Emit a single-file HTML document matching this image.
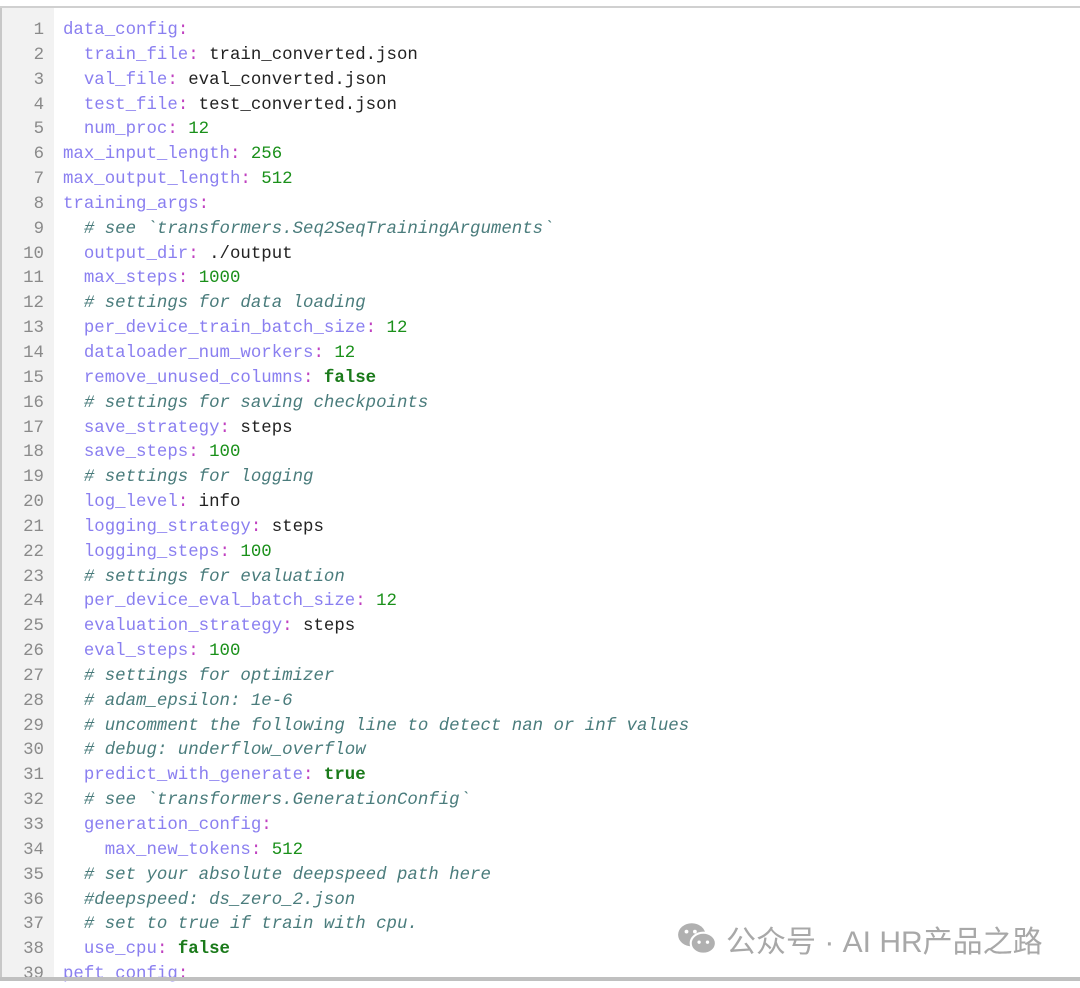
<!DOCTYPE html>
<html><head><meta charset="utf-8"><style>
body{margin:0;width:1080px;height:981px;overflow:hidden;background:#fff;position:relative}
.top{position:absolute;left:0;top:6px;width:1080px;height:2px;background:#d0d0d0}
.gut{position:absolute;left:0;top:8px;width:54px;height:970px;background:#f2f2f2;border-left:2px solid #c8c8c8;box-sizing:border-box}
.code{position:absolute;left:0;top:19px;font-family:"Liberation Mono",monospace;font-size:17.4px;line-height:24.84px;white-space:pre}
.ln{display:inline-block;width:44px;text-align:right;color:#8a8a8a;margin-right:19px}
.k{color:#8a7ff0}.c{color:#c040c0}.n{color:#1a901a}.b{color:#1a7a1a;font-weight:bold}.m{color:#4a7c7c;font-style:italic}.v{color:#222}
.bot{position:absolute;left:0;top:977px;width:1080px;height:4px;background:#c0c0c0}
.wm{position:absolute;left:676px;top:917px;font-family:"Liberation Sans","Noto Sans CJK SC",sans-serif;font-size:30px;color:#a8a8a8;display:flex;align-items:center;gap:8px}
</style></head><body>
<div class="top"></div><div class="gut"></div>
<div class="code"><span class="ln">1</span><span class="k">data_config</span><span class="c">:</span>
<span class="ln">2</span>  <span class="k">train_file</span><span class="c">:</span><span class="v"> train_converted.json</span>
<span class="ln">3</span>  <span class="k">val_file</span><span class="c">:</span><span class="v"> eval_converted.json</span>
<span class="ln">4</span>  <span class="k">test_file</span><span class="c">:</span><span class="v"> test_converted.json</span>
<span class="ln">5</span>  <span class="k">num_proc</span><span class="c">:</span> <span class="n">12</span>
<span class="ln">6</span><span class="k">max_input_length</span><span class="c">:</span> <span class="n">256</span>
<span class="ln">7</span><span class="k">max_output_length</span><span class="c">:</span> <span class="n">512</span>
<span class="ln">8</span><span class="k">training_args</span><span class="c">:</span>
<span class="ln">9</span>  <span class="m"># see `transformers.Seq2SeqTrainingArguments`</span>
<span class="ln">10</span>  <span class="k">output_dir</span><span class="c">:</span><span class="v"> ./output</span>
<span class="ln">11</span>  <span class="k">max_steps</span><span class="c">:</span> <span class="n">1000</span>
<span class="ln">12</span>  <span class="m"># settings for data loading</span>
<span class="ln">13</span>  <span class="k">per_device_train_batch_size</span><span class="c">:</span> <span class="n">12</span>
<span class="ln">14</span>  <span class="k">dataloader_num_workers</span><span class="c">:</span> <span class="n">12</span>
<span class="ln">15</span>  <span class="k">remove_unused_columns</span><span class="c">:</span> <span class="b">false</span>
<span class="ln">16</span>  <span class="m"># settings for saving checkpoints</span>
<span class="ln">17</span>  <span class="k">save_strategy</span><span class="c">:</span><span class="v"> steps</span>
<span class="ln">18</span>  <span class="k">save_steps</span><span class="c">:</span> <span class="n">100</span>
<span class="ln">19</span>  <span class="m"># settings for logging</span>
<span class="ln">20</span>  <span class="k">log_level</span><span class="c">:</span><span class="v"> info</span>
<span class="ln">21</span>  <span class="k">logging_strategy</span><span class="c">:</span><span class="v"> steps</span>
<span class="ln">22</span>  <span class="k">logging_steps</span><span class="c">:</span> <span class="n">100</span>
<span class="ln">23</span>  <span class="m"># settings for evaluation</span>
<span class="ln">24</span>  <span class="k">per_device_eval_batch_size</span><span class="c">:</span> <span class="n">12</span>
<span class="ln">25</span>  <span class="k">evaluation_strategy</span><span class="c">:</span><span class="v"> steps</span>
<span class="ln">26</span>  <span class="k">eval_steps</span><span class="c">:</span> <span class="n">100</span>
<span class="ln">27</span>  <span class="m"># settings for optimizer</span>
<span class="ln">28</span>  <span class="m"># adam_epsilon: 1e-6</span>
<span class="ln">29</span>  <span class="m"># uncomment the following line to detect nan or inf values</span>
<span class="ln">30</span>  <span class="m"># debug: underflow_overflow</span>
<span class="ln">31</span>  <span class="k">predict_with_generate</span><span class="c">:</span> <span class="b">true</span>
<span class="ln">32</span>  <span class="m"># see `transformers.GenerationConfig`</span>
<span class="ln">33</span>  <span class="k">generation_config</span><span class="c">:</span>
<span class="ln">34</span>    <span class="k">max_new_tokens</span><span class="c">:</span> <span class="n">512</span>
<span class="ln">35</span>  <span class="m"># set your absolute deepspeed path here</span>
<span class="ln">36</span>  <span class="m">#deepspeed: ds_zero_2.json</span>
<span class="ln">37</span>  <span class="m"># set to true if train with cpu.</span>
<span class="ln">38</span>  <span class="k">use_cpu</span><span class="c">:</span> <span class="b">false</span>
<span class="ln">39</span><span class="k">peft_config</span><span class="c">:</span></div>
<div class="bot"></div>
<div class="wm"><svg width="42" height="36" viewBox="0 0 40 34"><ellipse cx="15" cy="13" rx="13" ry="11" fill="#b0b0b0"/><ellipse cx="26" cy="21" rx="12" ry="10" fill="#b0b0b0" stroke="#fff" stroke-width="2"/><circle cx="10" cy="10" r="1.8" fill="#fff"/><circle cx="18" cy="10" r="1.8" fill="#fff"/><circle cx="22" cy="20" r="1.6" fill="#fff"/><circle cx="30" cy="20" r="1.6" fill="#fff"/></svg><span>公众号 · AI HR产品之路</span></div>
</body></html>
